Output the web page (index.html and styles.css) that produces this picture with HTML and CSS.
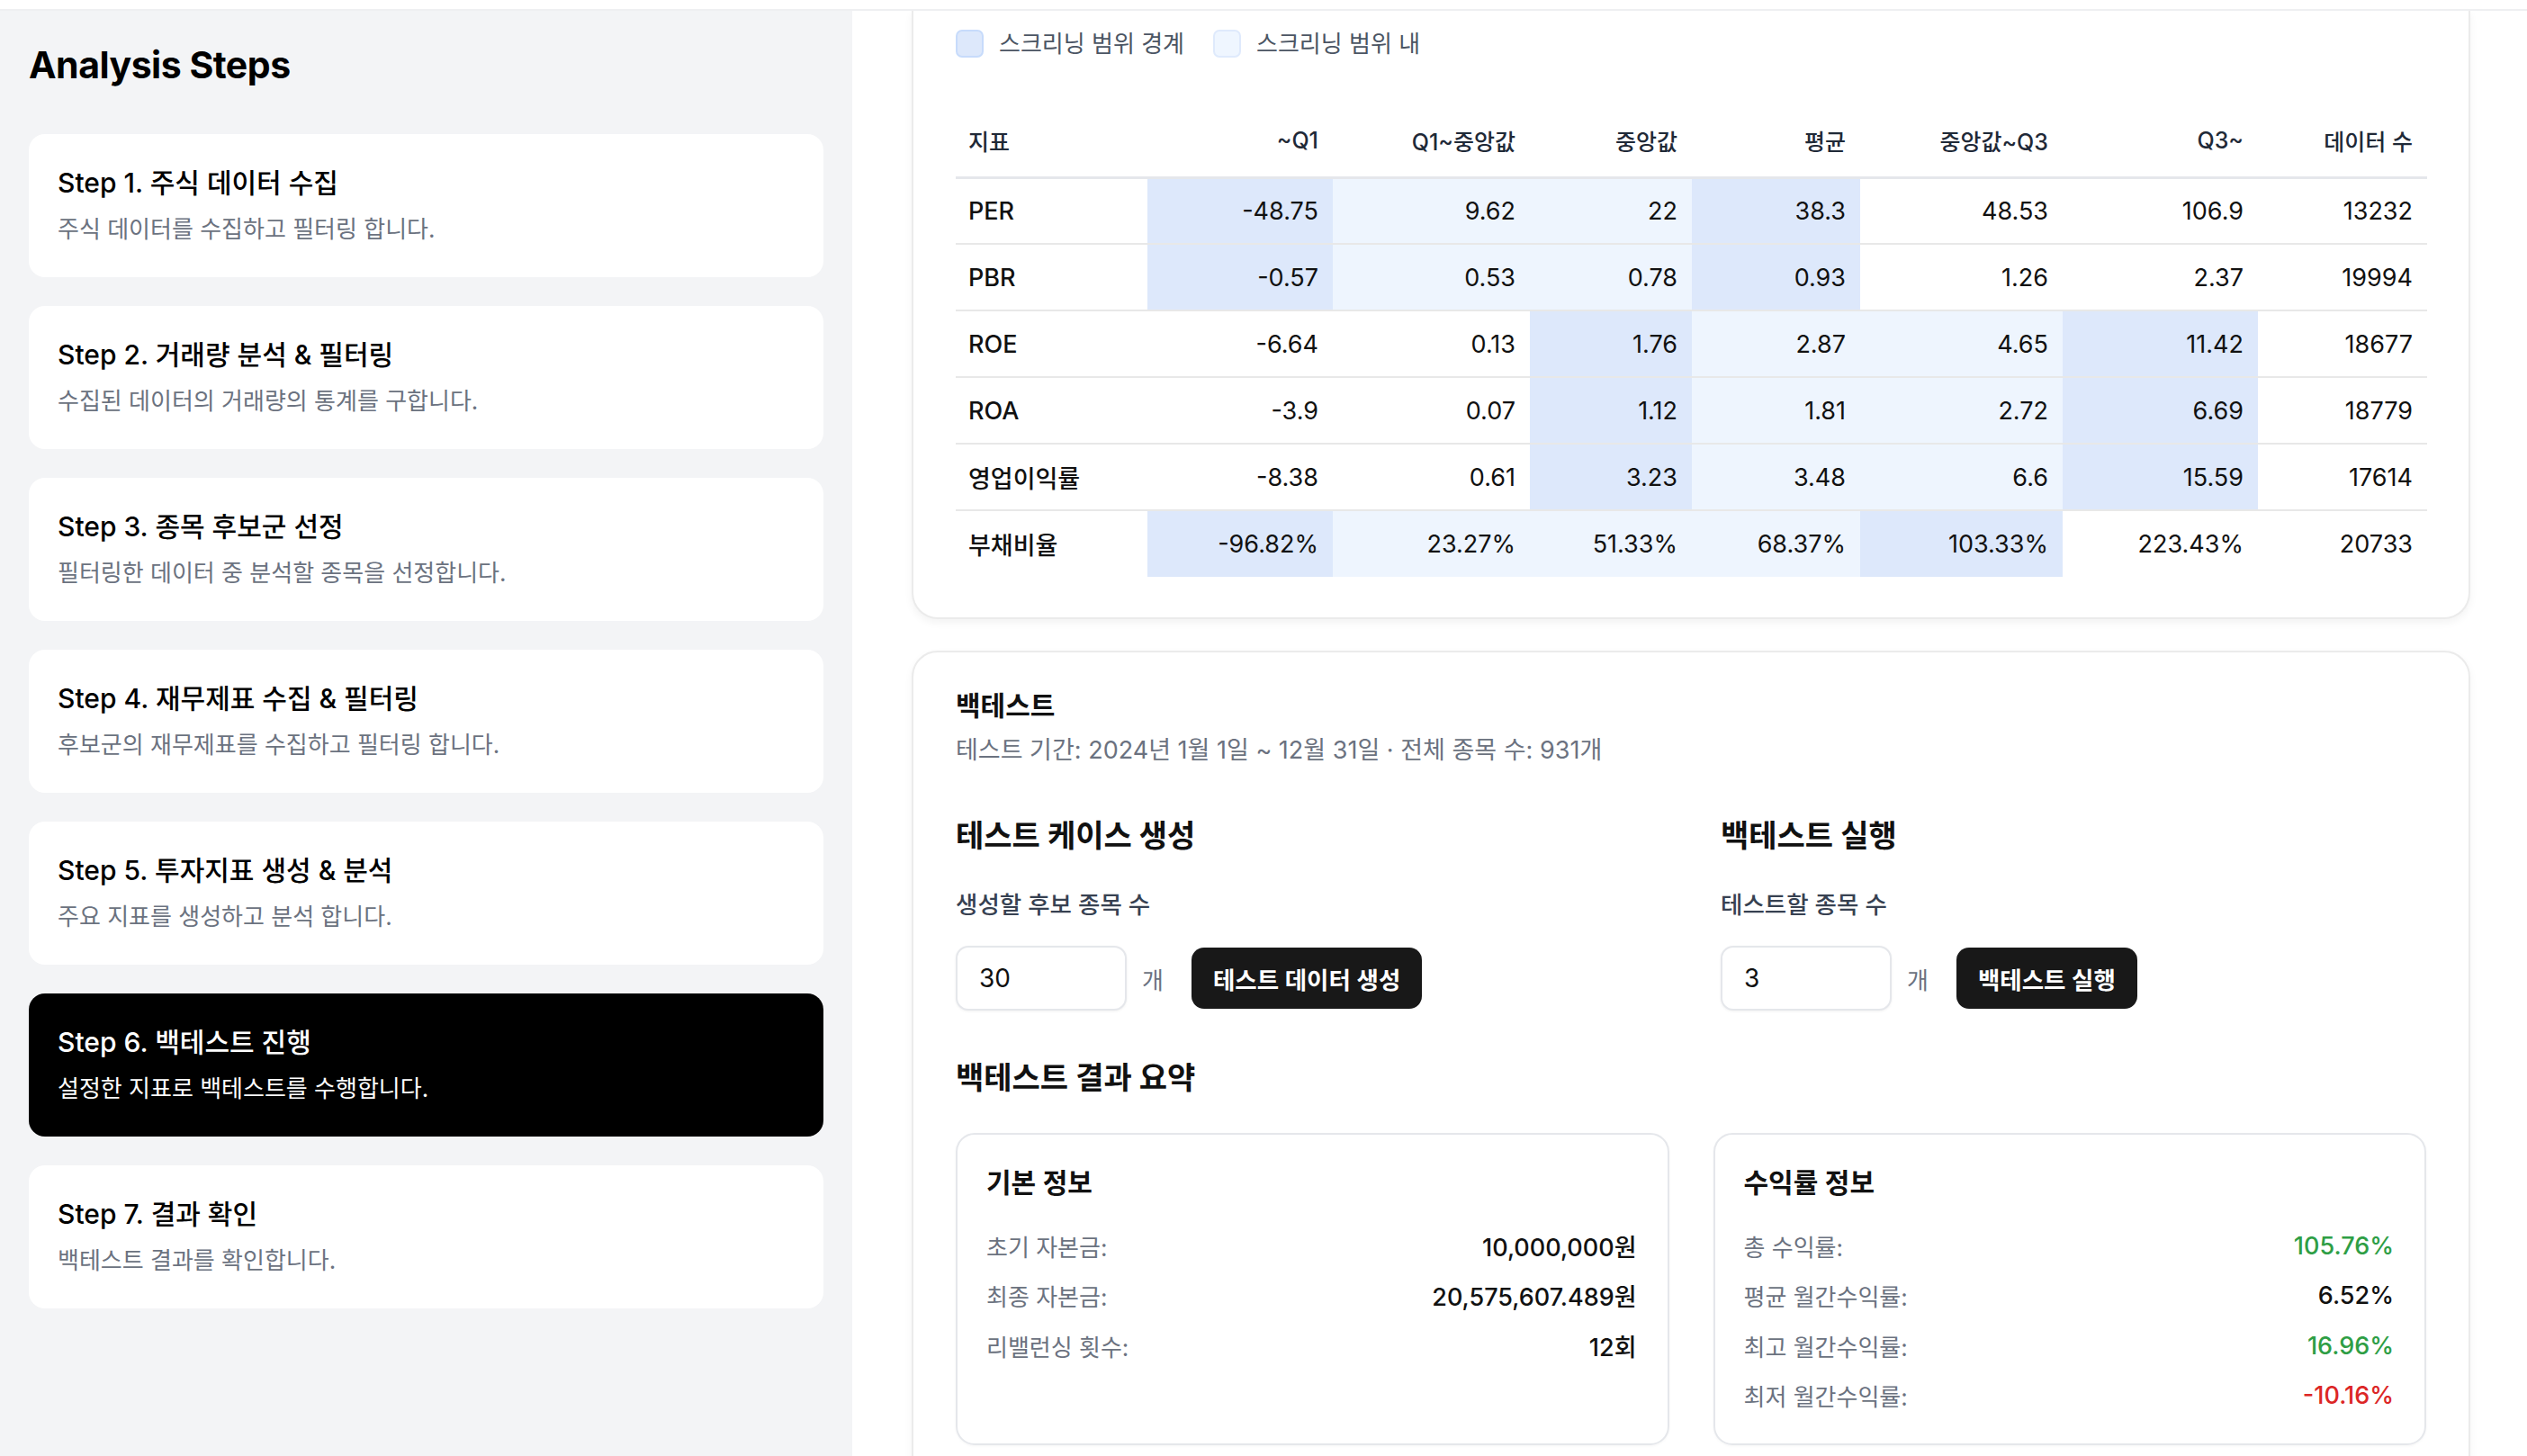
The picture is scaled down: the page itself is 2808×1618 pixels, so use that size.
FILE: index.html
```html
<!DOCTYPE html>
<html lang="ko">
<head>
<meta charset="utf-8">
<title>Analysis Steps</title>
<link rel="stylesheet" href="styles.css">
</head>
<body>
<div class="topbar"></div>
<div class="layout">
  <aside class="sidebar">
    <h1 class="sidebar-title">Analysis Steps</h1>
    <ul class="steps">
      <li class="step"><div class="step-title">Step 1. 주식 데이터 수집</div><div class="step-desc">주식 데이터를 수집하고 필터링 합니다.</div></li>
      <li class="step"><div class="step-title">Step 2. 거래량 분석 &amp; 필터링</div><div class="step-desc">수집된 데이터의 거래량의 통계를 구합니다.</div></li>
      <li class="step"><div class="step-title">Step 3. 종목 후보군 선정</div><div class="step-desc">필터링한 데이터 중 분석할 종목을 선정합니다.</div></li>
      <li class="step"><div class="step-title">Step 4. 재무제표 수집 &amp; 필터링</div><div class="step-desc">후보군의 재무제표를 수집하고 필터링 합니다.</div></li>
      <li class="step"><div class="step-title">Step 5. 투자지표 생성 &amp; 분석</div><div class="step-desc">주요 지표를 생성하고 분석 합니다.</div></li>
      <li class="step active"><div class="step-title">Step 6. 백테스트 진행</div><div class="step-desc">설정한 지표로 백테스트를 수행합니다.</div></li>
      <li class="step"><div class="step-title">Step 7. 결과 확인</div><div class="step-desc">백테스트 결과를 확인합니다.</div></li>
    </ul>
  </aside>
  <main class="main">
    <section class="card table-card">
      <div class="legend">
        <span class="legend-item"><span class="swatch swatch-edge"></span>스크리닝 범위 경계</span>
        <span class="legend-item"><span class="swatch swatch-in"></span>스크리닝 범위 내</span>
      </div>
      <table class="stats">
        <colgroup>
          <col class="c1"><col class="c2"><col class="c3"><col class="c4"><col class="c5"><col class="c6"><col class="c7"><col class="c8">
        </colgroup>
        <thead>
          <tr><th>지표</th><th>~Q1</th><th>Q1~중앙값</th><th>중앙값</th><th>평균</th><th>중앙값~Q3</th><th>Q3~</th><th>데이터 수</th></tr>
        </thead>
        <tbody>
          <tr><td>PER</td><td class="edge">-48.75</td><td class="in">9.62</td><td class="in">22</td><td class="edge">38.3</td><td>48.53</td><td>106.9</td><td>13232</td></tr>
          <tr><td>PBR</td><td class="edge">-0.57</td><td class="in">0.53</td><td class="in">0.78</td><td class="edge">0.93</td><td>1.26</td><td>2.37</td><td>19994</td></tr>
          <tr><td>ROE</td><td>-6.64</td><td>0.13</td><td class="edge">1.76</td><td class="in">2.87</td><td class="in">4.65</td><td class="edge">11.42</td><td>18677</td></tr>
          <tr><td>ROA</td><td>-3.9</td><td>0.07</td><td class="edge">1.12</td><td class="in">1.81</td><td class="in">2.72</td><td class="edge">6.69</td><td>18779</td></tr>
          <tr><td>영업이익률</td><td>-8.38</td><td>0.61</td><td class="edge">3.23</td><td class="in">3.48</td><td class="in">6.6</td><td class="edge">15.59</td><td>17614</td></tr>
          <tr><td>부채비율</td><td class="edge">-96.82%</td><td class="in">23.27%</td><td class="in">51.33%</td><td class="in">68.37%</td><td class="edge">103.33%</td><td>223.43%</td><td>20733</td></tr>
        </tbody>
      </table>
    </section>

    <section class="card backtest-card">
      <h2 class="bt-title">백테스트</h2>
      <p class="bt-sub">테스트 기간: 2024년 1월 1일 ~ 12월 31일 · 전체 종목 수: 931개</p>

      <div class="bt-grid">
        <div class="bt-col">
          <h3 class="section-title">테스트 케이스 생성</h3>
          <div class="field-label">생성할 후보 종목 수</div>
          <div class="field-row">
            <input class="num-input" type="text" value="30">
            <span class="unit">개</span>
            <button class="btn">테스트 데이터 생성</button>
          </div>
        </div>
        <div class="bt-col">
          <h3 class="section-title">백테스트 실행</h3>
          <div class="field-label">테스트할 종목 수</div>
          <div class="field-row">
            <input class="num-input" type="text" value="3">
            <span class="unit">개</span>
            <button class="btn">백테스트 실행</button>
          </div>
        </div>
      </div>

      <h3 class="section-title summary-title">백테스트 결과 요약</h3>
      <div class="summary-grid">
        <div class="summary-box">
          <h4 class="box-title">기본 정보</h4>
          <div class="kv"><span class="k">초기 자본금:</span><span class="v">10,000,000원</span></div>
          <div class="kv"><span class="k">최종 자본금:</span><span class="v">20,575,607.489원</span></div>
          <div class="kv"><span class="k">리밸런싱 횟수:</span><span class="v">12회</span></div>
        </div>
        <div class="summary-box">
          <h4 class="box-title">수익률 정보</h4>
          <div class="kv"><span class="k">총 수익률:</span><span class="v pos">105.76%</span></div>
          <div class="kv"><span class="k">평균 월간수익률:</span><span class="v">6.52%</span></div>
          <div class="kv"><span class="k">최고 월간수익률:</span><span class="v pos">16.96%</span></div>
          <div class="kv"><span class="k">최저 월간수익률:</span><span class="v neg">-10.16%</span></div>
        </div>
      </div>
    </section>
  </main>
</div>
</body>
</html>
```

FILE: styles.css
```css
* { box-sizing: border-box; }
html, body {
  margin: 0;
  padding: 0;
  width: 2808px;
  height: 1618px;
  overflow: hidden;
  background: #ffffff;
  font-family: "Inter", "Noto Sans CJK KR", sans-serif;
  color: #111111;
}
h1, h2, h3, h4, p, ul { margin: 0; padding: 0; }
ul { list-style: none; }

.topbar {
  height: 12px;
  background: #ffffff;
  border-bottom: 2px solid #eeeff1;
}

.layout {
  display: flex;
  height: 1606px;
}

/* Sidebar */
.sidebar {
  width: 947px;
  flex: none;
  background: #f3f4f6;
  padding: 36px 32px 0 32px;
}
.sidebar-title {
  font-size: 41px;
  line-height: 48px;
  font-weight: 700;
  letter-spacing: -0.5px;
  color: #000;
}
.steps {
  margin-top: 53px;
  display: flex;
  flex-direction: column;
  gap: 32px;
}
.step {
  height: 159px;
  background: #ffffff;
  border-radius: 18px;
  padding: 32px 32px 0 32px;
}
.step-title {
  font-size: 30px;
  line-height: 44px;
  font-weight: 500;
  color: #000;
}
.step-desc {
  margin-top: 10px;
  font-size: 26px;
  line-height: 40px;
  color: #6b7280;
}
.step.active { background: #000000; }
.step.active .step-title,
.step.active .step-desc { color: #ffffff; }

/* Main */
.main {
  flex: 1;
  padding: 0 63px 0 66px;
  overflow: hidden;
}
.card {
  background: #fff;
  border: 2px solid #ebebeb;
  border-radius: 29px;
  box-shadow: 0 4px 10px rgba(0, 0, 0, 0.05);
}
.table-card {
  border-top: none;
  border-radius: 0 0 29px 29px;
  padding: 21px 47px 45px 47px;
}
.legend {
  display: flex;
  gap: 32px;
  align-items: center;
}
.legend-item {
  display: flex;
  align-items: center;
  gap: 17px;
  font-size: 26px;
  line-height: 31px;
  color: #4b5563;
}
.swatch {
  width: 31px;
  height: 31px;
  border-radius: 7px;
  border: 2px solid #c7dbfb;
}
.swatch-edge { background: #dde8fb; }
.swatch-in { background: #eff6ff; border-color: #dfeafc; }

.stats {
  margin-top: 53px;
  width: 1635px;
  table-layout: fixed;
  border-collapse: collapse;
}
.stats col.c1 { width: 213px; }
.stats col.c2 { width: 206px; }
.stats col.c3 { width: 219px; }
.stats col.c4 { width: 180px; }
.stats col.c5 { width: 187px; }
.stats col.c6 { width: 225px; }
.stats col.c7 { width: 217px; }
.stats col.c8 { width: 188px; }
.stats th {
  height: 80px;
  font-size: 25px;
  font-weight: 500;
  color: #1f2937;
  text-align: right;
  padding: 0 16px;
  border-bottom: 3px solid #e5e7eb;
}
.stats th:first-child, .stats td:first-child {
  text-align: left;
  padding-left: 14px;
}
.stats td {
  height: 74px;
  font-size: 27px;
  color: #111;
  text-align: right;
  padding: 0 16px;
  border-bottom: 2px solid #e8e8e8;
}
.stats td:first-child { font-weight: 500; }
.stats tbody tr:last-child td { border-bottom: none; }
.stats td.edge { background: #dde8fb; }
.stats td.in { background: #eef5fe; }

/* Backtest card */
.backtest-card {
  margin-top: 35px;
  padding: 38px 47px 48px 47px;
}
.bt-title {
  font-size: 30px;
  line-height: 42px;
  font-weight: 700;
}
.bt-sub {
  margin-top: 10px;
  font-size: 27px;
  line-height: 38px;
  color: #6b7280;
}
.bt-grid {
  margin-top: 53px;
  display: grid;
  grid-template-columns: 1fr 1fr;
  column-gap: 66px;
}
.section-title {
  font-size: 34px;
  line-height: 46px;
  font-weight: 700;
}
.field-label {
  margin-top: 35px;
  font-size: 26.5px;
  line-height: 36px;
  font-weight: 500;
  color: #374151;
}
.field-row {
  margin-top: 28px;
  display: flex;
  align-items: center;
  gap: 17px;
}
.num-input {
  width: 190px;
  height: 72px;
  border: 2px solid #e5e7eb;
  border-radius: 14px;
  padding: 0 24px;
  font-family: inherit;
  font-size: 28px;
  color: #111;
  background: #fff;
  box-shadow: 0 1px 3px rgba(0, 0, 0, 0.06);
  outline: none;
}
.unit {
  font-size: 26px;
  color: #6b7280;
}
.btn {
  margin-left: 14px;
  height: 68px;
  padding: 0 24px;
  border: none;
  border-radius: 14px;
  background: #181818;
  color: #fff;
  font-family: inherit;
  font-size: 26.5px;
  font-weight: 600;
}
.summary-title { margin-top: 52px; }
.summary-grid {
  margin-top: 38px;
  display: grid;
  grid-template-columns: 1fr 1fr;
  column-gap: 49px;
}
.summary-box {
  border: 2px solid #e5e7eb;
  border-radius: 21px;
  padding: 33px 34px 33px 32px;
  box-shadow: 0 1px 3px rgba(0, 0, 0, 0.04);
}
.box-title {
  font-size: 30px;
  line-height: 40px;
  font-weight: 600;
  margin-bottom: 30px;
}
.kv {
  display: flex;
  justify-content: space-between;
  align-items: center;
  height: 40px;
  margin-bottom: 15.5px;
  font-size: 26px;
}
.kv:last-child { margin-bottom: 0; }
.k { color: #6b7280; }
.v { color: #111; font-weight: 500; font-size: 27px; }
.v.pos { color: #2e9e45; }
.v.neg { color: #dc2626; }
```
